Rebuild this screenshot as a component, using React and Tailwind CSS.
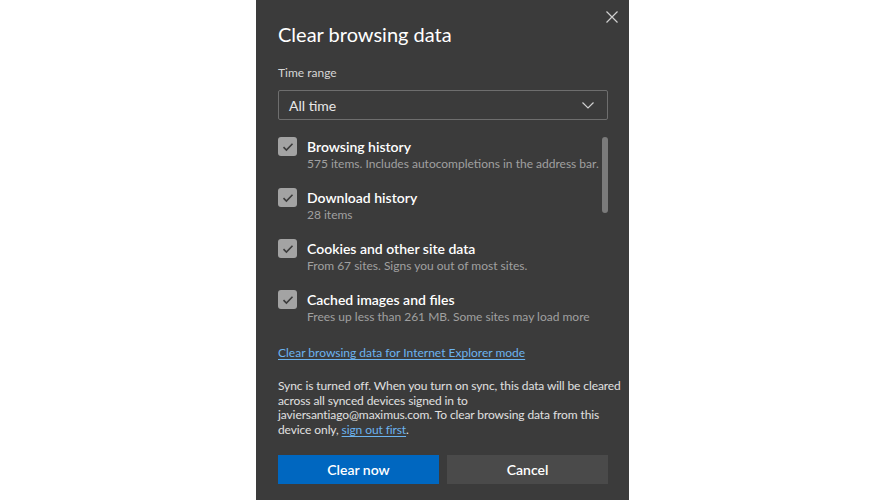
import { useState } from 'react';

const items = [
  { title: 'Browsing history', desc: '575 items. Includes autocompletions in the address bar.' },
  { title: 'Download history', desc: '28 items' },
  { title: 'Cookies and other site data', desc: 'From 67 sites. Signs you out of most sites.' },
  { title: 'Cached images and files', desc: 'Frees up less than 261 MB. Some sites may load more' },
];

function CheckBox({ checked, onClick }) {
  return (
    <button
      onClick={onClick}
      className="w-[19px] h-[19px] shrink-0 rounded-[3px] bg-[#a3a3a3] flex items-center justify-center"
    >
      {checked && (
        <svg width="12" height="10" viewBox="0 0 12 10" fill="none">
          <path d="M1.5 5.2 L4.4 8 L10.5 1.8" stroke="#3b3b3b" strokeWidth="1.6" />
        </svg>
      )}
    </button>
  );
}

export default function App() {
  const [checked, setChecked] = useState([true, true, true, true]);

  const toggle = (i) => {
    const next = [...checked];
    next[i] = !next[i];
    setChecked(next);
  };

  return (
    <div className="w-[885px] h-[500px] bg-white flex justify-center overflow-hidden" style={{ fontFamily: 'Lato, "Noto Sans", sans-serif' }}>
      <div className="relative w-[373px] h-[500px] bg-[#3b3b3b] pl-[22px] pr-[21px] pt-[20px] flex flex-col">
        <button className="absolute right-[11px] top-[11px] w-[12px] h-[12px]">
          <svg width="12" height="12" viewBox="0 0 12 12">
            <path d="M0.5 0.5 L11.5 11.5 M11.5 0.5 L0.5 11.5" stroke="#d0d0d0" strokeWidth="1.2" />
          </svg>
        </button>

        <h1 className="text-[20px] leading-[28px] text-white">Clear browsing data</h1>

        <div className="mt-[17px] text-[12px] leading-[16px] text-[#d6d6d6]">Time range</div>

        <div className="mt-[9px] h-[30px] shrink-0 border border-[#6e6e6e] rounded-[2px] flex items-center justify-between pl-[10px] pr-[13px]">
          <span className="text-[14px] text-[#e8e8e8]">All time</span>
          <svg width="12" height="7" viewBox="0 0 12 7" fill="none">
            <path d="M0.5 0.5 L6 6 L11.5 0.5" stroke="#d0d0d0" strokeWidth="1.2" />
          </svg>
        </div>

        <div className="mt-[17px] flex">
          <div className="flex-1 flex flex-col gap-[17px]">
            {items.map((it, i) => (
              <div key={it.title} className="flex gap-[10px]">
                <CheckBox checked={checked[i]} onClick={() => toggle(i)} />
                <div className="flex flex-col">
                  <span className="text-[14px] leading-[20px] font-semibold text-white">{it.title}</span>
                  <span className="text-[12px] leading-[14px] text-[#a0a0a0] whitespace-nowrap">{it.desc}</span>
                </div>
              </div>
            ))}
          </div>
          <div className="w-[6px] h-[76px] rounded-full bg-[#7b7b7b] ml-[2px]"></div>
        </div>

        <a href="#" className="mt-[21px] text-[12px] leading-[16px] text-[#6cb3ef] underline underline-offset-2 self-start">
          Clear browsing data for Internet Explorer mode
        </a>

        <p className="mt-[18px] -mr-[4px] text-[12px] leading-[14.7px] tracking-[-0.1px] text-[#e0e0e0] whitespace-nowrap">
          Sync is turned off. When you turn on sync, this data will be cleared<br />
          across all synced devices signed in to<br />
          javiersantiago@maximus.com. To clear browsing data from this<br />
          device only, <a href="#" className="text-[#6cb3ef] underline underline-offset-2">sign out first</a>.
        </p>

        <div className="mt-[17px] flex gap-[8px]">
          <button className="flex-1 h-[29px] bg-[#0067c0] text-white text-[14px] font-semibold">Clear now</button>
          <button className="flex-1 h-[29px] bg-[#4a4a4a] text-white text-[14px] font-semibold">Cancel</button>
        </div>
      </div>
    </div>
  );
}
